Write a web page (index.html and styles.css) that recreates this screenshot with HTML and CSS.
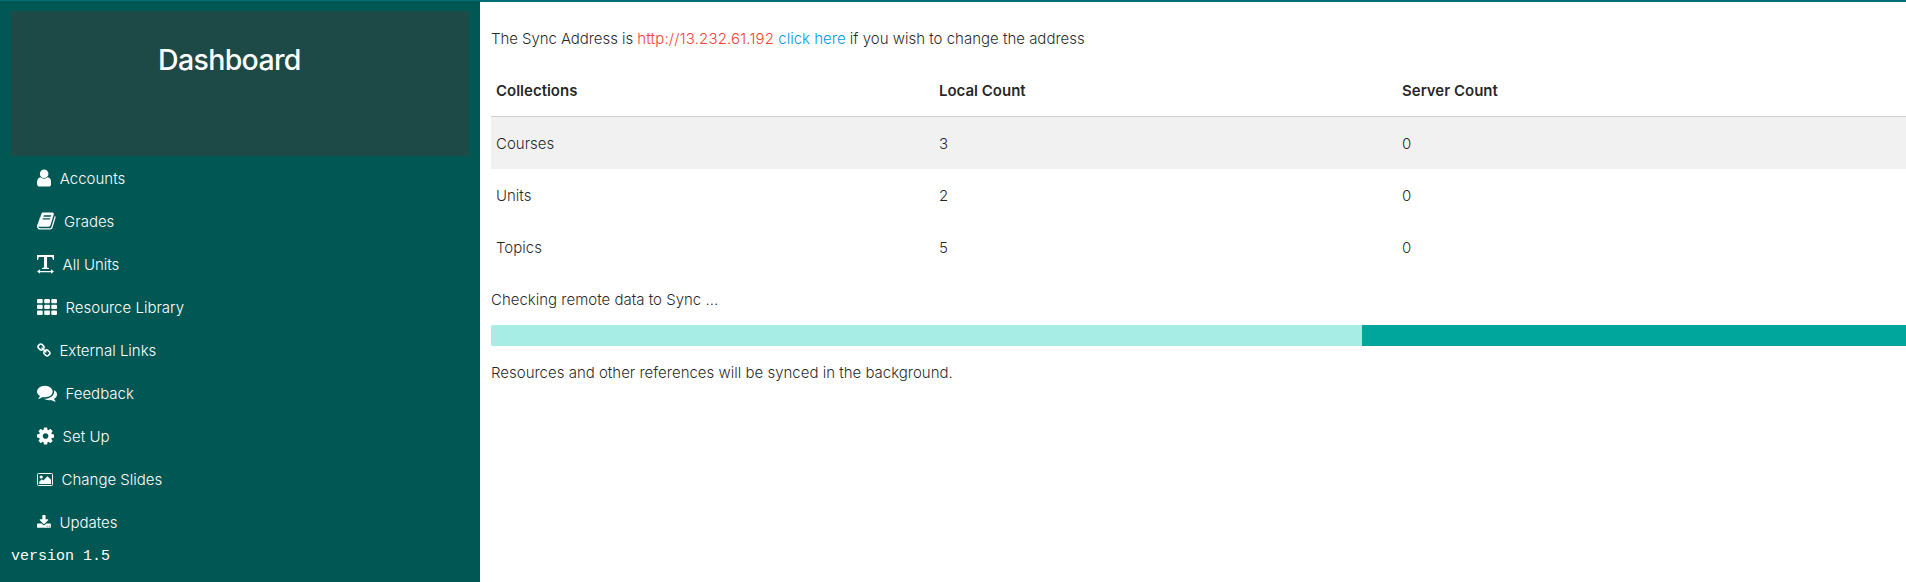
FILE: index.html
```html
<!DOCTYPE html>
<html lang="en">
<head>
<meta charset="utf-8">
<title>Dashboard</title>
<link rel="stylesheet" href="styles.css">
</head>
<body>
<div class="topline"></div>
<div class="layout">
  <aside class="sidebar">
    <div class="brand"><h1>Dashboard</h1></div>
    <nav class="menu">
      <a class="item"><svg class="icon" width="14.3" height="20" viewBox="256 0 1280 1792"><path d="M1536 1399q0 109-62.5 187t-150.5 78h-854q-88 0-150.5-78t-62.5-187q0-85 8.5-160.5t31.5-152 58.5-131 94-89 134.5-34.5q131 128 313 128t313-128q76 0 134.5 34.5t94 89 58.5 131 31.5 152 8.5 160.5zm-256-887q0 159-112.5 271.5t-271.5 112.5-271.5-112.5-112.5-271.5 112.5-271.5 271.5-112.5 271.5 112.5 112.5 271.5z"/></svg><span>Accounts</span></a>
      <a class="item"><svg class="icon" width="18.6" height="20" viewBox="64 0 1664 1792"><path d="M1703 478q40 57 18 129l-275 906q-19 64-76.5 107.5t-122.5 43.5h-923q-77 0-148.5-53.5t-99.5-131.5q-24-67-2-127 0-4 3-27t4-37q1-8-3-21.5t-3-19.5q2-11 8-21t16.5-23.5 16.5-23.5q23-38 45-91.5t30-91.5q3-10 .5-30t-.5-28q3-11 17-28t17-23q21-36 42-92t25-90q1-9-2.5-32t.5-28q4-13 22-30.5t22-22.5q19-26 42.5-84.5t27.5-96.5q1-8-3-25.5t-2-26.5q2-8 9-18t18-23 17-21q8-12 16.5-30.5t15-35 16-36 19.5-32 26.5-23.5 36-11.5 47.5 5.5l-1 3q38-9 51-9h761q74 0 114 56t18 130l-274 906q-36 119-71.5 153.5t-128.5 34.5h-869q-27 0-38 15-11 16-1 43 24 70 144 70h923q29 0 56-15.5t35-41.5l300-987q7-22 5-57 38 15 59 43zm-1064 2q-4 13 2 22.5t20 9.5h608q13 0 25.5-9.5t16.5-22.5l21-64q4-13-2-22.5t-20-9.5h-608q-13 0-25.5 9.5t-16.5 22.5zm-83 256q-4 13 2 22.5t20 9.5h608q13 0 25.5-9.5t16.5-22.5l21-64q4-13-2-22.5t-20-9.5h-608q-13 0-25.5 9.5t-16.5 22.5z"/></svg><span>Grades</span></a>
      <a class="item"><svg class="icon" width="17.1" height="20" viewBox="0 0 17 20"><path d="M0 1h17v5h-1l-.9-3H10v10.500l2 .6v.9H5v-.9l2-.6V3H1.900L1 6H0z"/><path d="M0 17.500l3-2.200v1.600h11v-1.600l3 2.200-3 2.200v-1.500H3v1.500z"/></svg><span>All Units</span></a>
      <a class="item"><svg class="icon" width="20" height="20" viewBox="0 0 20 20"><rect x="0" y="2" width="5.700" height="4.300" rx="1"/><rect x="7.200" y="2" width="5.700" height="4.300" rx="1"/><rect x="14.300" y="2" width="5.700" height="4.300" rx="1"/><rect x="0" y="7.800" width="5.700" height="4.300" rx="1"/><rect x="7.200" y="7.800" width="5.700" height="4.300" rx="1"/><rect x="14.300" y="7.800" width="5.700" height="4.300" rx="1"/><rect x="0" y="13.600" width="5.700" height="4.300" rx="1"/><rect x="7.200" y="13.600" width="5.700" height="4.300" rx="1"/><rect x="14.300" y="13.600" width="5.700" height="4.300" rx="1"/></svg><span>Resource Library</span></a>
      <a class="item"><svg class="icon small" width="13.9" height="15" viewBox="64 0 1664 1792"><path d="M1520 1216q0-40-28-68l-208-208q-28-28-68-28-42 0-72 32 3 3 19 18.500t21.500 21.500 15 19 13 25.500 3.500 27.500q0 40-28 68t-68 28q-15 0-27.500-3.500t-25.500-13-19-15-21.500-21.500-18.500-19q-33 31-33 73 0 40 28 68l206 207q27 27 68 27 40 0 68-26l147-146q28-28 28-67zm-703-705q0-40-28-68l-206-207q-28-28-68-28-39 0-68 27l-147 146q-28 28-28 67 0 40 28 68l208 208q27 27 68 27 42 0 72-31-3-3-19-18.500t-21.500-21.500-15-19-13-25.500-3.500-27.500q0-40 28-68t68-28q15 0 27.500 3.500t25.500 13 19 15 21.500 21.500 18.500 19q33-31 33-73zm895 705q0 120-85 203l-147 146q-83 83-203 83-121 0-204-85l-206-207q-83-83-83-203 0-123 88-209l-88-88q-86 88-208 88-120 0-204-84l-208-208q-84-84-84-204t85-203l147-146q83-83 203-83 121 0 204 85l206 207q83 83 83 203 0 123-88 209l88 88q86-88 208-88 120 0 204 84l208 208q84 84 84 204z"/></svg><span>External Links</span></a>
      <a class="item"><svg class="icon" width="20" height="20" viewBox="0 0 1792 1792"><path d="M1408 768q0 139-94 257t-256.500 186.500-353.500 68.500q-86 0-176-16-124 88-278 128-36 9-86 16h-3q-11 0-20.500-8t-11.500-21q-1-3-1-6.500t.5-6.500 2-6l2.500-5 3.500-5.500 4-5 4.500-5 4-4.500q5-6 23-25t26-29.500 22.500-29 25-38.500 20.500-44q-124-72-195-177t-71-224q0-139 94-257t256.500-186.500 353.500-68.500 353.500 68.500 256.500 186.500 94 257zm384 256q0 120-71 224.500t-195 176.500q10 24 20.500 44t25 38.500 22.500 29 26 29.500 23 25q1 1 4 4.500t4.500 5 4 5 3.500 5.500l2.500 5 2 6 .5 6.500-1 6.500q-3 14-13 22t-22 7q-50-7-86-16-154-40-278-128-90 16-176 16-271 0-472-132 58 4 88 4 161 0 309-45t264-129q125-92 192-212t67-254q0-77-23-152 129 71 204 178t75 230z"/></svg><span>Feedback</span></a>
      <a class="item"><svg class="icon" width="17.1" height="20" viewBox="128 0 1536 1792"><path d="M1152 896q0-106-75-181t-181-75-181 75-75 181 75 181 181 75 181-75 75-181zm512-109v222q0 12-8 23t-20 13l-185 28q-19 54-39 91 35 50 107 138 10 12 10 25t-9 23q-27 37-99 108t-94 71q-12 0-26-9l-138-108q-44 23-91 38-16 136-29 186-7 28-36 28h-222q-14 0-24.500-8.500t-11.500-21.500l-28-184q-49-16-90-37l-141 107q-10 9-25 9-14 0-25-11-126-114-165-168-7-10-7-23 0-12 8-23 15-21 51-66.500t54-70.500q-27-50-41-99l-183-27q-13-2-21-12.500t-8-23.500v-222q0-12 8-23t19-13l186-28q14-46 39-92-40-57-107-138-10-12-10-24 0-10 9-23 26-36 98.500-107.500t94.500-71.500q13 0 26 10l138 107q44-23 91-38 16-136 29-186 7-28 36-28h222q14 0 24.500 8.500t11.500 21.500l28 184q49 16 90 37l142-107q9-9 24-9 13 0 25 10 129 119 165 170 7 8 7 22 0 12-8 23-15 21-51 66.500t-54 70.500q26 50 41 98l183 28q13 2 21 12.500t8 23.500z"/></svg><span>Set Up</span></a>
      <a class="item"><svg class="icon small" width="16.1" height="15" viewBox="0 0 16 15"><rect x=".5" y="1.500" width="15" height="12" rx="1" fill="none" stroke="#fff"/><circle cx="4.200" cy="5" r="1.600"/><path d="M2.200 12V9.700l2.600-2.500L6.200 8.500l4.200-4.300 3.600 3.600V12z"/></svg><span>Change Slides</span></a>
      <a class="item"><svg class="icon small" width="13.9" height="15" viewBox="64 0 1664 1792"><path d="M1344 1344q0-26-19-45t-45-19-45 19-19 45 19 45 45 19 45-19 19-45zm256 0q0-26-19-45t-45-19-45 19-19 45 19 45 45 19 45-19 19-45zm128-224v320q0 40-28 68t-68 28h-1472q-40 0-68-28t-28-68v-320q0-40 28-68t68-28h465l135 136q58 56 136 56t136-56l136-136h464q40 0 68 28t28 68zm-325-569q17 41-14 70l-448 448q-18 19-45 19t-45-19l-448-448q-31-29-14-70 17-39 59-39h256v-448q0-26 19-45t45-19h256q26 0 45 19t19 45v448h256q42 0 59 39z"/></svg><span>Updates</span></a>
    </nav>
    <div class="version">version 1.5</div>
  </aside>
  <main class="content">
    <p class="address"><span class="lead">The Sync Address is</span> <span class="url">http://13.232.61.192</span> <a class="link">click here</a> if you wish to change the address</p>
    <table class="counts">
      <thead><tr><th class="name">Collections</th><th class="local">Local Count</th><th>Server Count</th></tr></thead>
      <tbody>
        <tr><td>Courses</td><td>3</td><td>0</td></tr>
        <tr><td>Units</td><td>2</td><td>0</td></tr>
        <tr><td>Topics</td><td>5</td><td>0</td></tr>
      </tbody>
    </table>
    <p class="checking">Checking remote data to Sync ...</p>
    <div class="progress"><div class="rest"></div></div>
    <p class="note">Resources and other references will be synced in the background.</p>
  </main>
</div>
</body>
</html>
```
FILE: styles.css
```css
* { box-sizing: border-box; }
body {
  margin: 0;
  height: 582px;
  overflow: hidden;
  display: flex;
  flex-direction: column;
  background: #fff;
  color: rgba(0, 0, 0, 0.87);
  font: 300 15px/22px Inter, "Liberation Sans", sans-serif;
}
.topline { height: 2px; flex: none; background: #006d77; }
.layout { display: flex; flex: 1; min-height: 0; }
.sidebar { width: 480px; flex: none; padding: 10px 11px 0; background: #005754; color: #fff; margin-top: -1px; }
.brand { height: 145px; padding-top: 31px; padding-left: 147px; background: #1d4946; }
.brand h1 { margin: 0; font-size: 28.500px; line-height: 36px; font-weight: 500; letter-spacing: -0.650px; }
.menu { display: flex; flex-direction: column; padding-left: 26px; }
.item { display: flex; align-items: center; height: 43px; gap: 8.500px; }
.item span { padding-top: 2px; }
.icon { fill: #fff; flex: none; }
.small { margin-top: 2px; }
.version { font: 15px/20px "Liberation Mono", monospace; margin-top: 4px; }
.content { flex: 1; min-width: 0; padding-left: 11px; }
p { margin: 0; white-space: nowrap; }
.address { padding-top: 26px; }
.lead { letter-spacing: -0.070px; }
.url { color: #f44336; letter-spacing: 0.170px; }
.link { color: #039be5; }
.counts { width: 100%; margin-top: 14px; border-collapse: collapse; table-layout: fixed; }
.counts th, .counts td { height: 52px; padding: 2px 5px 0; text-align: left; }
.counts th { font-weight: 600; border-bottom: 1px solid #d0d0d0; }
.counts .name { width: 443px; }
.counts .local { width: 463px; }
.counts tbody tr:first-child { background: #f1f1f1; }
.counts tbody tr:first-child td { height: 53px; padding-top: 3px; }
.checking { margin-top: 16px; }
.progress { height: 21px; margin-top: 14px; background: #a7ece5; border-radius: 2px 0 0 2px; }
.rest { width: 544px; height: 21px; margin-left: auto; background: #00a69b; }
.note { margin-top: 16px; }
```
